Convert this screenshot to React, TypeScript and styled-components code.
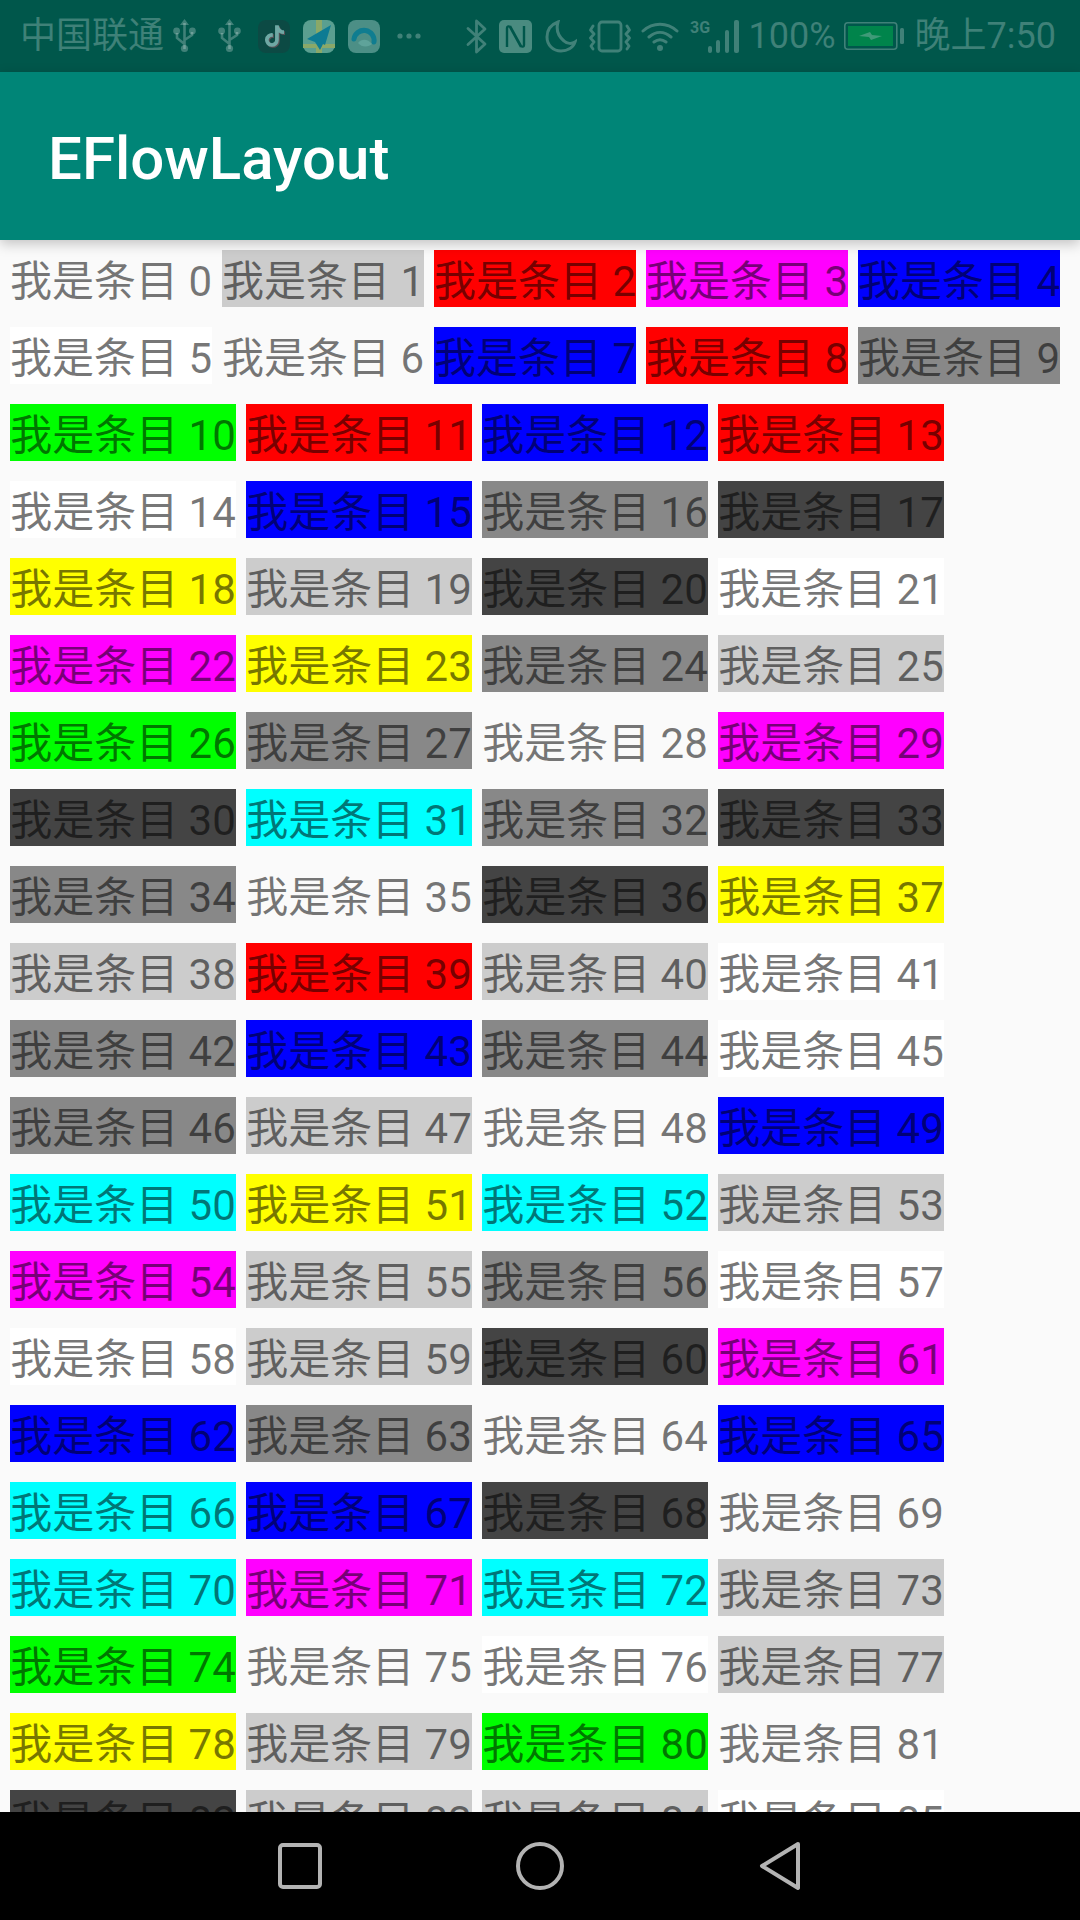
import * as React from 'react';
import { createGlobalStyle, styled } from 'styled-components';
import { FaTiktok } from 'react-icons/fa';

const GlobalStyle = createGlobalStyle`
  *, *::before, *::after {
    box-sizing: border-box;
  }

  html, body {
    margin: 0;
    padding: 0;
    background: #fafafa;
  }
`;

const FADED = 'rgba(255,255,255,0.25)';

const COLORS: Record<string, string> = {
  t: 'transparent',
  w: '#ffffff',
  l: '#cccccc',
  g: '#888888',
  d: '#444444',
  r: '#ff0000',
  n: '#00ff00',
  b: '#0000ff',
  y: '#ffff00',
  c: '#00ffff',
  m: '#ff00ff',
};

// one letter per item, in the order the list shows them
const ITEM_COLORS =
  'tlrmbwtbrg' +
  'nrbr' + 'wbgd' + 'yldw' + 'mygl' + 'ngtm' + 'dcgd' + 'gtdy' + 'lrlw' +
  'gbgw' + 'gltb' + 'cycl' + 'mlgw' + 'wldm' + 'bgtb' + 'cbdt' + 'cmcl' +
  'ntwl' + 'ylnt' + 'dllw';

const Screen = styled.div`
  width: 1080px;
  height: 1920px;
  display: flex;
  flex-direction: column;
  overflow: hidden;
  background: #fafafa;
  font-family: Roboto, 'Noto Sans CJK SC', sans-serif;
`;

const StatusBar = styled.div`
  height: 72px;
  flex: none;
  display: flex;
  align-items: center;
  justify-content: space-between;
  padding: 0 24px 0 20px;
  background: #00574b;
`;

const StatusGroup = styled.div`
  display: flex;
  align-items: center;
`;

const StatusText = styled.span<{ $left?: number }>`
  margin-left: ${(p) => p.$left ?? 0}px;
  font-size: 36px;
  line-height: 72px;
  color: ${FADED};
  white-space: nowrap;
`;

const StatusIcon = styled.svg<{ $left?: number }>`
  display: block;
  flex: none;
  margin-left: ${(p) => p.$left ?? 0}px;
`;

const AppTile = styled.div<{ $left: number }>`
  width: 32px;
  height: 33px;
  flex: none;
  margin-left: ${(p) => p.$left}px;
  border-radius: 8px;
  background: #0c4a44;
  display: flex;
  align-items: center;
  justify-content: center;
  color: #6fa8a4;

  svg {
    width: 19px;
    height: 22px;
    filter: drop-shadow(1px 1px 0 #5a5257);
  }
`;

const AppBar = styled.header`
  height: 168px;
  flex: none;
  position: relative;
  z-index: 1;
  display: flex;
  align-items: center;
  padding: 5px 0 0 48px;
  background: #008577;
  box-shadow: 0 4px 12px rgba(0, 0, 0, 0.22);
`;

const Title = styled.h1`
  margin: 0;
  font-family: Roboto, sans-serif;
  font-size: 60px;
  font-weight: 500;
  color: #ffffff;
`;

const FlowList = styled.main`
  flex: 1;
  min-height: 0;
  overflow: hidden;
  display: flex;
  flex-wrap: wrap;
  align-content: flex-start;
  gap: 20px 10px;
  padding: 10px;
`;

const FlowItem = styled.span<{ $bg: string; $wide: boolean }>`
  width: ${(p) => (p.$wide ? 226 : 202)}px;
  height: 57px;
  line-height: 63px;
  font-size: 42px;
  white-space: nowrap;
  text-align: center;
  color: rgba(0, 0, 0, 0.54);
  background: ${(p) => p.$bg};
`;

const NavBar = styled.nav`
  height: 108px;
  flex: none;
  display: grid;
  grid-template-columns: repeat(3, 240px);
  justify-content: center;
  align-items: center;
  justify-items: center;
  background: #000000;
`;

const UsbIcon = ({ left }: { left?: number }) => (
  <StatusIcon $left={left} width="23" height="34" viewBox="0 0 23 34" fill="none" stroke={FADED} strokeWidth="2.6">
    <path d="M11.5 4v26M11.5 25 4 19v-5M11.5 21l7.5-5v-3" />
    <path d="M11.5 0 7 6h9z" fill={FADED} stroke="none" />
    <circle cx="11.5" cy="29.5" r="3.6" fill={FADED} stroke="none" />
    <circle cx="3.6" cy="12" r="3.4" fill={FADED} stroke="none" />
    <circle cx="19.4" cy="12" r="3.4" fill={FADED} stroke="none" />
  </StatusIcon>
);

const PlaneTile = ({ left }: { left: number }) => (
  <StatusIcon $left={left} width="32" height="33" viewBox="0 0 32 33">
    <rect width="32" height="33" rx="8" fill="#5a9f90" />
    <path d="M13 0h6v33h-6zM0 24h32v4H0z" fill="#8aa868" />
    <path d="M28 5 4 19l8 3 5 8 3-6 2 1z" fill="#0d7b93" />
  </StatusIcon>
);

const SwirlTile = ({ left }: { left: number }) => (
  <StatusIcon $left={left} width="32" height="33" viewBox="0 0 32 33" fill="none">
    <rect width="32" height="33" rx="8" fill="#4c8f86" />
    <path d="M6 19a10 10 0 1 1 20 3" stroke="#0f7d90" strokeWidth="5" strokeLinecap="round" />
    <path d="M10 23c4-5 10-4 14 1-3 3-10 4-14-1z" fill="#5fa39a" />
  </StatusIcon>
);

const Dots = () => (
  <StatusIcon $left={17} width="24" height="6" viewBox="0 0 24 6" fill={FADED}>
    <circle cx="3" cy="3" r="2.6" />
    <circle cx="12" cy="3" r="2.6" />
    <circle cx="21" cy="3" r="2.6" />
  </StatusIcon>
);

const BluetoothIcon = () => (
  <StatusIcon width="21" height="35" viewBox="0 0 21 35" fill="none" stroke={FADED} strokeWidth="2.8" strokeLinejoin="round" strokeLinecap="round">
    <path d="M2 9.5 19 25 10.5 33V2L19 10 2 25.5" />
  </StatusIcon>
);

const NfcIcon = () => (
  <StatusIcon $left={12} width="33" height="33" viewBox="0 0 33 33">
    <rect width="33" height="33" rx="5" fill="#4a8b80" />
    <path d="M8 27V8c0-2 2-2 3-1l11 20M25 6v19c0 2-2 2-3 1L11 6" fill="none" stroke="#00574b" strokeWidth="2.4" />
  </StatusIcon>
);

const MoonIcon = () => (
  <StatusIcon $left={13} width="32" height="33" viewBox="0 0 32 33" fill="none" stroke={FADED} strokeWidth="3">
    <path d="M13 2C5 5 2 11 2 17c0 8 6 14 14 14 6 0 12-3 14-9-3 2-8 2-11-1C13 16 11 9 13 2z" />
  </StatusIcon>
);

const VibrateIcon = () => (
  <StatusIcon $left={12} width="42" height="33" viewBox="0 0 42 33" fill="none" stroke={FADED} strokeWidth="2.8" strokeLinecap="round" strokeLinejoin="round">
    <rect x="10" y="2" width="22" height="29" rx="3" />
    <path d="M4 6 1.500 10 5 14l-3.500 4L5 22l-3 4 2 3M38 6l2.500 4L37 14l3.500 4L37 22l3 4-2 3" />
  </StatusIcon>
);

const WifiIcon = () => (
  <StatusIcon $left={10} width="38" height="31" viewBox="0 0 38 31" fill="none" stroke={FADED} strokeWidth="3" strokeLinecap="round">
    <path d="M2 10c10-9 24-9 34 0M8 16c7-6 15-6 22 0M13 21c4-3 8-3 12 0" />
    <circle cx="19" cy="27" r="3" fill={FADED} stroke="none" />
  </StatusIcon>
);

const SignalIcon = () => (
  <StatusIcon $left={11} width="52" height="33" viewBox="0 0 52 33" fill={FADED}>
    <rect x="18" y="26" width="4" height="7" rx="2" />
    <rect x="26" y="20" width="4" height="13" rx="2" />
    <rect x="35" y="10" width="4" height="23" rx="2" />
    <rect x="44" y="0" width="5" height="33" rx="2" />
    <text x="0" y="13" fontFamily="Roboto, sans-serif" fontSize="16" fontWeight="700">3G</text>
  </StatusIcon>
);

const BatteryIcon = () => (
  <StatusIcon $left={8} width="60" height="28" viewBox="0 0 60 28">
    <rect x="0.800" y="0.800" width="52" height="26.400" rx="3" fill="none" stroke={FADED} strokeWidth="1.600" />
    <rect x="4" y="4" width="45" height="20" fill="#00844b" />
    <rect x="56" y="6" width="4" height="16" rx="1.500" fill={FADED} />
    <path d="M15 14l11-4 2 3 10 1-11 4-2-3z" fill="#3f9a78" />
  </StatusIcon>
);

export default function App() {
  return (
    <Screen>
      <GlobalStyle />
      <StatusBar>
        <StatusGroup>
          <StatusText>中国联通</StatusText>
          <UsbIcon left={9} />
          <UsbIcon left={22} />
          <AppTile $left={17}>
            <FaTiktok />
          </AppTile>
          <PlaneTile left={13} />
          <SwirlTile left={13} />
          <Dots />
        </StatusGroup>
        <StatusGroup>
          <BluetoothIcon />
          <NfcIcon />
          <MoonIcon />
          <VibrateIcon />
          <WifiIcon />
          <SignalIcon />
          <StatusText $left={7}>100%</StatusText>
          <BatteryIcon />
          <StatusText $left={11}>晚上7:50</StatusText>
        </StatusGroup>
      </StatusBar>
      <AppBar>
        <Title>EFlowLayout</Title>
      </AppBar>
      <FlowList>
        {ITEM_COLORS.split('').map((key, i) => (
          <FlowItem key={i} $bg={COLORS[key]} $wide={i > 9}>
            我是条目 {i}
          </FlowItem>
        ))}
      </FlowList>
      <NavBar>
        <svg width="44" height="46" viewBox="0 0 44 46" fill="none" stroke="#b3b3b3" strokeWidth="4">
          <rect x="2" y="2" width="40" height="42" rx="3" />
        </svg>
        <svg width="48" height="48" viewBox="0 0 48 48" fill="none" stroke="#b3b3b3" strokeWidth="4">
          <circle cx="24" cy="24" r="22" />
        </svg>
        <svg width="42" height="50" viewBox="0 0 42 50" fill="none" stroke="#b3b3b3" strokeWidth="4" strokeLinejoin="round">
          <path d="M39 3 3 25l36 22z" />
        </svg>
      </NavBar>
    </Screen>
  );
}
